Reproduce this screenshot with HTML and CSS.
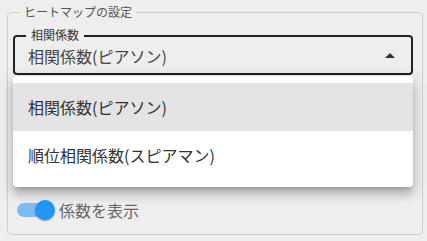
FILE: index.html
```html
<!DOCTYPE html>
<html lang="ja">
<head>
    <meta charset="UTF-8">
    <meta name="viewport" content="width=device-width, initial-scale=1.0">
    <title>ヒートマップの設定</title>
    <link rel="stylesheet" href="styles.css">
</head>
<body>
    <fieldset class="settings">
        <legend class="settings-title">ヒートマップの設定</legend>

        <div class="select">
            <span class="select-label">相関係数</span>
            <div class="select-value">相関係数(ピアソン)</div>
            <span class="select-arrow"></span>

            <!-- open dropdown -->
            <ul class="menu">
                <li class="menu-item selected">相関係数(ピアソン)</li>
                <li class="menu-item">順位相関係数(スピアマン)</li>
            </ul>
        </div>

        <label class="toggle">
            <span class="switch">
                <span class="switch-track"></span>
                <span class="switch-thumb"></span>
            </span>
            <span class="toggle-text">係数を表示</span>
        </label>
    </fieldset>
</body>
</html>
```

FILE: styles.css
```css
body {
    margin: 0;
    background-color: #eeeeee;
    font-family: "Noto Sans CJK JP", "Noto Sans", sans-serif;
    color: #333;
}

.settings {
    margin: 5px 4px 5px 7px;
    padding: 16px 9px 13px 5px;
    border: 1px solid #cdcdcd;
    border-radius: 4px;
}

.settings-title {
    margin-left: 7px;
    padding: 0 4px;
    font-size: 12px;
    line-height: 14px;
    color: #555;
}

.select {
    position: relative;
    height: 36px;
    border: 2px solid #222;
    border-radius: 4px;
    display: flex;
    align-items: center;
    padding: 0 15px 0 13px;
}

.select-label {
    position: absolute;
    top: -9px;
    left: 11px;
    padding: 0 5px;
    background-color: #eeeeee;
    font-size: 12px;
    line-height: 14px;
    color: #333;
}

.select-value {
    flex: 1;
    font-size: 16px;
    line-height: 20px;
    margin-top: 2px;
    color: #444;
}

.select-arrow {
    width: 0;
    height: 0;
    border-left: 5px solid transparent;
    border-right: 5px solid transparent;
    border-bottom: 5px solid #333;
    margin-right: 1px;
}

.menu {
    position: absolute;
    top: 39px;
    left: -2px;
    width: 400px;
    margin: 0;
    padding: 7px 0 8px;
    list-style: none;
    background-color: white;
    border-radius: 4px;
    box-shadow: 0 5px 5px -3px rgba(0, 0, 0, 0.2), 0 8px 10px 1px rgba(0, 0, 0, 0.14), 0 3px 14px 2px rgba(0, 0, 0, 0.12);
    z-index: 2;
}

.menu-item {
    height: 48px;
    display: flex;
    align-items: center;
    padding-left: 15px;
    font-size: 16px;
    color: #333;
}

.menu-item.selected {
    background-color: #e4e4e4;
}

.toggle {
    display: flex;
    align-items: center;
    margin-top: 124px;
    height: 22px;
}

.switch {
    position: relative;
    width: 42px;
    height: 20px;
    margin-left: 4px;
}

.switch-track {
    position: absolute;
    left: 0;
    top: 3px;
    width: 34px;
    height: 14px;
    border-radius: 7px;
    background-color: #7dbbf1;
}

.switch-thumb {
    position: absolute;
    left: 18px;
    top: 0;
    width: 20px;
    height: 20px;
    border-radius: 50%;
    background-color: #2196f3;
    box-shadow: 0 2px 1px -1px rgba(0, 0, 0, 0.2), 0 1px 1px rgba(0, 0, 0, 0.14), 0 1px 3px rgba(0, 0, 0, 0.12);
}

.toggle-text {
    font-size: 16px;
    color: #666;
}
```
